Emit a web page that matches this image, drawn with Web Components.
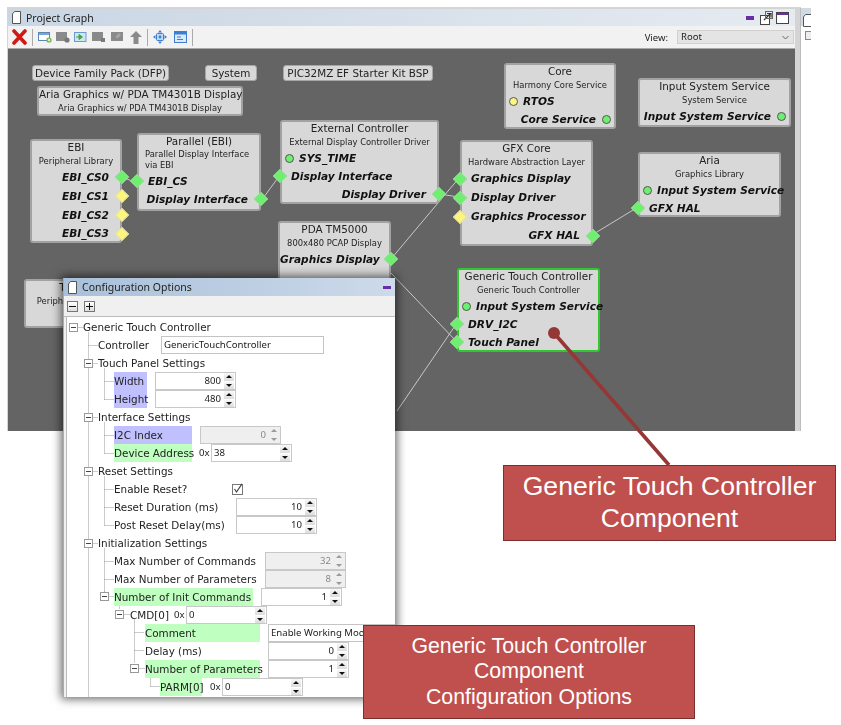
<!DOCTYPE html>
<html>
<head>
<meta charset="utf-8">
<title>Project Graph</title>
<style>
  html, body { margin: 0; padding: 0; background: #fff; }
  body { font-family: "DejaVu Sans", sans-serif; }
</style>
</head>
<body>
<app-stage>
  <project-window>
    <graph-pill style="left:24px;top:16px;width:137px">Device Family Pack (DFP)</graph-pill>
    <graph-pill style="left:197px;top:16px;width:52px">System</graph-pill>
    <graph-pill style="left:275px;top:16px;width:150px">PIC32MZ EF Starter Kit BSP</graph-pill>

    <graph-node name="Aria Graphics w/ PDA TM4301B Display" sub="Aria Graphics w/ PDA TM4301B Display" style="left:29px;top:37px;width:206px;height:30px"></graph-node>

    <graph-node name="Core" sub="Harmony Core Service" style="left:496px;top:14px;width:112px;height:66px">
      <graph-port shape="circle" color="yellow">RTOS</graph-port>
      <graph-port side="right" shape="circle" color="green">Core Service</graph-port>
    </graph-node>
    <graph-node name="Input System Service" sub="System Service" style="left:630px;top:29px;width:153px;height:49px">
      <graph-port side="right" shape="circle" color="green">Input System Service</graph-port>
    </graph-node>
    <graph-node name="External Controller" sub="External Display Controller Driver" style="left:272px;top:71px;width:159px;height:84px">
      <graph-port shape="circle" color="green">SYS_TIME</graph-port>
      <graph-port>Display Interface</graph-port>
      <graph-port side="right">Display Driver</graph-port>
    </graph-node>
    <graph-node name="EBI" sub="Peripheral Library" style="left:22px;top:90px;width:92px;height:104px;--port-h:18.8px">
      <graph-port side="right">EBI_CS0</graph-port>
      <graph-port side="right" color="yellow">EBI_CS1</graph-port>
      <graph-port side="right" color="yellow">EBI_CS2</graph-port>
      <graph-port side="right" color="yellow">EBI_CS3</graph-port>
    </graph-node>
    <graph-node name="Parallel (EBI)" style="left:129px;top:84px;width:124px;height:78px">
      <span slot="sub" class="left">Parallel Display Interface<br>via EBI</span>
      <graph-port>EBI_CS</graph-port>
      <graph-port side="right">Display Interface</graph-port>
    </graph-node>
    <graph-node name="GFX Core" sub="Hardware Abstraction Layer" style="left:452px;top:91px;width:133px;height:106px;--port-h:19px">
      <graph-port>Graphics Display</graph-port>
      <graph-port>Display Driver</graph-port>
      <graph-port color="yellow">Graphics Processor</graph-port>
      <graph-port side="right">GFX HAL</graph-port>
    </graph-node>
    <graph-node name="Aria" sub="Graphics Library" style="left:630px;top:103px;width:143px;height:65px">
      <graph-port shape="circle" color="green">Input System Service</graph-port>
      <graph-port>GFX HAL</graph-port>
    </graph-node>
    <graph-node name="PDA TM5000" sub="800x480 PCAP Display" style="left:270px;top:172px;width:113px;height:100px">
      <graph-port side="right">Graphics Display</graph-port>
    </graph-node>
    <graph-node name="Timer" sub="Peripheral Library" style="left:16px;top:230px;width:100px;height:49px"></graph-node>
    <graph-node selected name="Generic Touch Controller" sub="Generic Touch Controller" style="left:449px;top:219px;width:143px;height:84px">
      <graph-port shape="circle" color="green">Input System Service</graph-port>
      <graph-port>DRV_I2C</graph-port>
      <graph-port>Touch Panel</graph-port>
    </graph-node>
  </project-window>

  <side-window></side-window>

  <config-window>
    <cfg-row indent="16" label="Generic Touch Controller" lw="180"></cfg-row>
    <cfg-row indent="31" label="Controller" lw="59"><text-box style="width:163px">GenericTouchController</text-box></cfg-row>
    <cfg-row indent="31" label="Touch Panel Settings" lw="180"></cfg-row>
    <cfg-row indent="47" label="Width" lw="33" fill="blue" gap="8"><spin-box value="800"></spin-box></cfg-row>
    <cfg-row indent="47" label="Height" lw="33" fill="blue" gap="8"><spin-box value="480"></spin-box></cfg-row>
    <cfg-row indent="31" label="Interface Settings" lw="180"></cfg-row>
    <cfg-row indent="47" label="I2C Index" lw="78" fill="blue" gap="8"><spin-box value="0" disabled></spin-box></cfg-row>
    <cfg-row indent="47" label="Device Address" lw="78" fill="green" gap="7"><hex-prefix>0x</hex-prefix><spin-box value="38" left></spin-box></cfg-row>
    <cfg-row indent="31" label="Reset Settings" lw="180"></cfg-row>
    <cfg-row indent="47" label="Enable Reset?" lw="118" gap="0"><check-mark></check-mark></cfg-row>
    <cfg-row indent="47" label="Reset Duration (ms)" lw="118"><spin-box value="10"></spin-box></cfg-row>
    <cfg-row indent="47" label="Post Reset Delay(ms)" lw="118"><spin-box value="10"></spin-box></cfg-row>
    <cfg-row indent="31" label="Initialization Settings" lw="180"></cfg-row>
    <cfg-row indent="47" label="Max Number of Commands" lw="147"><spin-box value="32" disabled></spin-box></cfg-row>
    <cfg-row indent="47" label="Max Number of Parameters" lw="147"><spin-box value="8" disabled></spin-box></cfg-row>
    <cfg-row indent="47" label="Number of Init Commands" lw="139" fill="green" gap="8"><spin-box value="1"></spin-box></cfg-row>
    <cfg-row indent="63" label="CMD[0]" lw="41" gap="3"><hex-prefix>0x</hex-prefix><spin-box value="0" left></spin-box></cfg-row>
    <cfg-row indent="78" label="Comment" lw="115" fill="green" gap="8"><text-box style="width:140px">Enable Working Mode</text-box></cfg-row>
    <cfg-row indent="78" label="Delay (ms)" lw="115" gap="8"><spin-box value="0"></spin-box></cfg-row>
    <cfg-row indent="78" label="Number of Parameters" lw="115" fill="green" gap="8"><spin-box value="1"></spin-box></cfg-row>
    <cfg-row indent="93" label="PARM[0]" lw="42" fill="green" gap="8"><hex-prefix>0x</hex-prefix><spin-box value="0" left></spin-box></cfg-row>
  </config-window>

  <callout-box size="26.6" style="left:503px;top:465px;width:333px;height:76px">Generic Touch Controller<br>Component</callout-box>
  <callout-box size="21.3" style="left:363px;top:625px;width:332px;height:94px">Generic Touch Controller<br>Component<br>Configuration Options</callout-box>
  <leader-line></leader-line>
</app-stage>

<script>
  const GLYPH_FONT = '"DejaVu Sans", sans-serif'
  const UI_FONT = '"Noto Sans", "Liberation Sans", sans-serif'

  const docIcon = `<svg width="9" height="13" viewBox="0 0 9 13"><path d="M2.5.5h6v12h-8V3z" fill="#fff" stroke="#555"/></svg>`

  class AppStage extends HTMLElement {
    constructor() {
      super()
      this.attachShadow({ mode: 'open' }).innerHTML = `
        <style>
          :host { display: block; position: relative; width: 841px; height: 725px; overflow: hidden; background: #fff; }
          .soft { filter: blur(.3px); }
        </style>
        <slot></slot>`
    }
  }

  class ProjectWindow extends HTMLElement {
    constructor() {
      super()
      this.attachShadow({ mode: 'open' }).innerHTML = `
        <style>
          :host { display: flex; flex-direction: column; position: absolute; left: 7px; top: 7px; width: 794px; height: 424px;
            box-sizing: border-box; border: solid #d4d4d4; border-width: 2px 6px 0 1px; font-family: ${UI_FONT}; filter: blur(.25px); }
          .title { height: 17px; display: flex; align-items: center; gap: 5px; padding: 0 6px 0 4px; font-size: 10.5px; color: #222;
            background: linear-gradient(90deg, #c9d6e4, #e6ebf1); }
          .title span { flex: 1; }
          .ctl { display: flex; align-items: center; gap: 3px; }
          .bar { height: 23px; display: flex; align-items: center; padding-left: 4px; background: #f2f2f2; border-bottom: 1px solid #a8a8a8; box-sizing: border-box; }
          .bar svg { flex: none; display: block; }
          .sep { width: 1px; height: 17px; background: #aaa; margin: 0 5px 0 5px; }
          .view { margin-left: auto; display: flex; align-items: center; gap: 9px; font-size: 9.5px; color: #222; margin-right: 1px; }
          .select { width: 117px; height: 14px; background: #e4e4e4; border: 1px solid #d0d0d0; box-sizing: border-box; padding-left: 3px; line-height: 12px; position: relative; }
          .select svg { position: absolute; right: 4px; top: 4px; }
          .canvas { position: relative; flex: 1; background: #646464; overflow: hidden; }
          .wires { position: absolute; left: 0; top: 0; }
        </style>
        <div class="title">${docIcon}<span>Project Graph</span>
          <div class="ctl">
            <svg width="8" height="4" viewBox="0 0 8 4"><rect width="8" height="4" fill="#6a2ca8"/></svg>
            <svg width="14" height="14" viewBox="0 0 14 14" style="margin-left:2px"><rect x="1.5" y="4.5" width="9" height="9" fill="#fff" stroke="#444"/><path d="M5 9l6-6M8 2.5h4v4" fill="none" stroke="#333" stroke-width="1.2"/><rect x="6.5" y=".5" width="7" height="7" fill="none" stroke="#666"/></svg>
            <svg width="13" height="12" viewBox="0 0 13 12"><rect x=".5" y=".5" width="12" height="11" fill="#fff" stroke="#444"/><rect x="1" y="1" width="11" height="2" fill="#6a2ca8"/></svg>
          </div>
        </div>
        <div class="bar">
          <svg width="15" height="16" viewBox="0 0 15 16"><path d="M2 2l11 12M13 2L2 14" stroke="#d11a14" stroke-width="3.6" stroke-linecap="round"/></svg>
          <div class="sep"></div>
          <svg width="14" height="12" viewBox="0 0 14 12"><rect x=".5" y="1.5" width="11" height="8" fill="#fff" stroke="#5b87b8"/><rect x="1" y="2" width="10" height="2" fill="#7aa5d4"/><circle cx="11" cy="9" r="2.6" fill="#6db33f"/><path d="M9.6 9h2.8M11 7.6v2.8" stroke="#fff"/></svg>
          <svg style="margin-left:4px" width="14" height="12" viewBox="0 0 14 12"><rect y="1" width="11" height="9" fill="#8a8a8a"/><circle cx="11" cy="9" r="2.6" fill="#777"/></svg>
          <svg style="margin-left:4px" width="13" height="12" viewBox="0 0 13 12"><rect x=".5" y="1.5" width="11.5" height="9" fill="#cfe4f7" stroke="#6a9cc9"/><path d="M2 6h5M5 3.5L8.5 6 5 8.5z" fill="#3fa73f" stroke="#3fa73f"/></svg>
          <svg style="margin-left:5px" width="14" height="12" viewBox="0 0 14 12"><rect y="1" width="11" height="9" fill="#8a8a8a"/><rect x="9" y="7" width="4" height="4" fill="#7a7a7a"/></svg>
          <svg style="margin-left:5px" width="12" height="12" viewBox="0 0 12 12"><rect y="1" width="12" height="9" fill="#8a8a8a"/><path d="M8 2l2 2-3 3H5V5z" fill="#a5a5a5"/></svg>
          <svg style="margin-left:7px" width="12" height="13" viewBox="0 0 12 13"><path d="M6 0l6 6H8.5v7h-5V6H0z" fill="#8a8a8a"/></svg>
          <div class="sep"></div>
          <svg width="14" height="14" viewBox="0 0 14 14"><path d="M7 0l2 2.5H5zM7 14l2-2.5H5zM0 7l2.5-2v4zM14 7l-2.500-2v4z" fill="#3f7fd0"/><rect x="3.500" y="3.500" width="7" height="7" rx="1" fill="#bcd8f5" stroke="#3f7fd0"/><circle cx="7" cy="7" r="1.400" fill="#3f7fd0"/></svg>
          <svg style="margin-left:7px" width="13" height="12" viewBox="0 0 13 12"><rect x=".5" y=".5" width="12" height="11" fill="#d9ebfb" stroke="#3f7fd0"/><rect x="1" y="1" width="11" height="2.500" fill="#3f7fd0"/><path d="M3 6h4M3 8.500h6" stroke="#3f7fd0"/></svg>
          <div class="sep"></div>
          <div class="view">View:
            <div class="select">Root<svg width="7" height="5" viewBox="0 0 7 5"><path d="M.5 1l3 3 3-3" fill="none" stroke="#666"/></svg></div>
          </div>
        </div>
        <div class="canvas">
          <svg class="wires" width="790" height="382" stroke="#c8c8c8" stroke-width="1" fill="none">
            <path d="M114 128L129 134M253 152L272 126M431 145L451 148M383 210L451 129M584 186L630 158M381 222L449 293M389 362L449 274"/>
          </svg>
          <slot></slot>
        </div>`
    }
  }

  class SideWindow extends HTMLElement {
    constructor() {
      super()
      this.attachShadow({ mode: 'open' }).innerHTML = `
        <style>
          :host { display: block; position: absolute; left: 800px; top: 8px; width: 11px; height: 423px; box-sizing: border-box; border-left: 1px solid #bdbdbd; overflow: hidden; background: #fff; }
          .title { height: 18px; background: #cfdae6; border-top: 1px solid #d8d8d8; box-sizing: border-box; padding: 3px 0 0 2px; }
          .box { margin: 5px 0 0 4px; width: 9px; height: 9px; box-sizing: border-box; border: 1px solid #888; background: #eee; }
        </style>
        <div class="title">${docIcon}</div>
        <div class="box"></div>`
    }
  }

  class GraphPill extends HTMLElement {
    constructor() {
      super()
      this.attachShadow({ mode: 'open' }).innerHTML = `
        <style>
          :host { display: block; position: absolute; height: 16px; box-sizing: border-box; background: #d8d8d8; border: 1px solid #a6a6a6; border-radius: 3px;
            font: 10.4px/14px ${GLYPH_FONT}; color: #222; text-align: center; white-space: nowrap; }
        </style>
        <slot></slot>`
    }
  }

  class GraphNode extends HTMLElement {
    constructor() {
      super()
      this.attachShadow({ mode: 'open' })
    }
    connectedCallback() {
      const selected = this.hasAttribute('selected')
      this.shadowRoot.innerHTML = `
        <style>
          :host { display: block; position: absolute; box-sizing: border-box; background: #d8d8d8; border-radius: 3px;
            border: 2px solid ${selected ? '#2fc92f' : '#a2a2a2'}; color: #222; --port-h: 18px; }
          .name { font: 10.4px/13px ${GLYPH_FONT}; text-align: center; white-space: nowrap; }
          .sub { font: 8.4px/15px ${GLYPH_FONT}; text-align: center; white-space: nowrap; margin-bottom: -1px; }
          ::slotted([slot=sub]) { display: block; text-align: left; padding: 1px 0 1px 6px; line-height: 11px; margin-bottom: 1px; }
        </style>
        <div class="name"></div>
        <div class="sub"><slot name="sub"></slot></div>
        <slot></slot>`
      this.shadowRoot.querySelector('.name').textContent = this.getAttribute('name')
      const sub = this.getAttribute('sub')
      if (sub) this.shadowRoot.querySelector('.sub').append(sub)
    }
  }

  class GraphPort extends HTMLElement {
    constructor() {
      super()
      this.attachShadow({ mode: 'open' })
    }
    connectedCallback() {
      const right = this.getAttribute('side') === 'right'
      const circle = this.getAttribute('shape') === 'circle'
      const yellow = this.getAttribute('color') === 'yellow'
      const fill = yellow ? '#fdf57d' : '#6fef6f'
      const inset = circle ? (right ? 18 : 17) : (right ? 11 : 9)
      const mark = circle
        ? `width:7px;height:7px;border-radius:50%;border:1px solid #555;background:${fill};${right ? 'right:3px' : 'left:3px'};top:calc(50% - 4.5px)`
        : `width:8px;height:8px;transform:rotate(45deg);background:${fill};border:1px solid ${yellow ? '#e5e0a0' : '#8fe08f'};${right ? 'right:-7px' : 'left:-7px'};top:calc(50% - 5px)`
      this.shadowRoot.innerHTML = `
        <style>
          :host { display: block; position: relative; height: var(--port-h, 18px); font: italic bold 10.6px/18px ${GLYPH_FONT}; color: #111;
            white-space: nowrap; text-align: ${right ? 'right' : 'left'}; padding-${right ? 'right' : 'left'}: ${inset}px; }
          i { position: absolute; ${mark}; }
        </style>
        <i></i><slot></slot>`
    }
  }

  class ConfigWindow extends HTMLElement {
    constructor() {
      super()
      this.attachShadow({ mode: 'open' }).innerHTML = `
        <style>
          :host { display: flex; flex-direction: column; position: absolute; left: 63px; top: 278px; width: 332px; height: 419px; background: #f0f0f0;
            box-sizing: border-box; border-left: 1px solid #aaa; box-shadow: 0 0 9px 2px rgba(0,0,0,.6); filter: blur(.25px); font-family: ${UI_FONT}; }
          .title { height: 18px; flex: none; display: flex; align-items: center; gap: 5px; padding: 0 4px 0 4px; background: linear-gradient(90deg, #a9c0da, #cddaea); font-size: 10.5px; color: #222; }
          .title span { flex: 1; }
          .title i { width: 8px; height: 3px; background: #6a2ca8; }
          .tools { height: 21px; flex: none; display: flex; align-items: center; gap: 6px; padding-left: 3px; box-sizing: border-box; border-bottom: 1px solid #bbb; }
          .tools b { width: 9px; height: 9px; border: 1px solid #777; background: linear-gradient(#fff, #ddd); position: relative; }
          .tools b::before { content: ""; position: absolute; left: 1px; right: 1px; top: 4px; height: 1px; background: #111; }
          .tools b.plus::after { content: ""; position: absolute; top: 1px; bottom: 1px; left: 4px; width: 1px; background: #111; }
          .tree { position: relative; flex: 1; background: #fff; margin-left: 2px; border-left: 1px solid #bbb; padding-top: 1px; overflow: hidden; }
          .guides { position: absolute; left: 0; top: 0; }
          .boxes b { position: absolute; width: 7px; height: 7px; border: 1px solid #999; background: #fff; }
          .boxes b::before { content: ""; position: absolute; left: 1px; right: 1px; top: 3px; height: 1px; background: #444; }
          .rows { position: relative; }
        </style>
        <div class="title">${docIcon}<span>Configuration Options</span><i></i></div>
        <div class="tools"><b></b><b class="plus"></b></div>
        <div class="tree">
          <svg class="guides" width="330" height="390" fill="none" stroke="#999" stroke-dasharray="1 1"></svg>
          <div class="boxes"></div>
          <div class="rows"><slot></slot></div>
        </div>`
      // tree guide lines in page coordinates, converted to the tree's origin
      const ox = 66, oy = 317
      const segs = [[72,327,81,327],[87,332,87,697],[87,345,96,345],[103,368,103,399],[103,381,112,381],[103,399,112,399],
        [103,422,103,453],[103,435,112,435],[103,453,112,453],[103,476,103,525],[103,489,112,489],[103,507,112,507],[103,525,112,525],
        [103,548,103,591],[103,561,112,561],[103,579,112,579],[87,363,96,363],[87,417,96,417],[87,471,96,471],[87,543,96,543],[107,596,112,596],
        [103,591,103,596],[118,601,118,609],[123,614,128,614],[133,619,133,663],[133,632,143,632],[133,650,143,650],[138,668,143,668],[149,673,149,686],[149,686,158,686]]
      this.shadowRoot.querySelector('.guides').innerHTML =
        segs.map(s => `<path d="M${s[0]-ox+.5} ${s[1]-oy+.5}L${s[2]-ox+.5} ${s[3]-oy+.5}"/>`).join('')
      const boxes = [[72,327],[87,363],[87,417],[87,471],[87,543],[103,596],[118,614],[133,668]]
      this.shadowRoot.querySelector('.boxes').innerHTML =
        boxes.map(b => `<b style="left:${b[0]-ox-4}px;top:${b[1]-oy-4}px"></b>`).join('')
    }
  }

  class CfgRow extends HTMLElement {
    constructor() {
      super()
      this.attachShadow({ mode: 'open' })
    }
    connectedCallback() {
      const fills = { blue: '#c0c0ff', green: '#bfffbf' }
      const fill = fills[this.getAttribute('fill')] || 'transparent'
      const gap = this.getAttribute('gap') || '4'
      this.shadowRoot.innerHTML = `
        <style>
          :host { display: flex; align-items: center; height: 18px; white-space: nowrap; font: 10.4px/18px ${GLYPH_FONT}; color: #222;
            padding-left: ${this.getAttribute('indent')}px; }
          .label { flex: none; height: 18px; background: ${fill}; width: ${this.getAttribute('lw')}px; margin-right: ${gap}px; }
          .value { display: flex; align-items: center; flex: none; }
        </style>
        <div class="label"></div>
        <div class="value"><slot></slot></div>`
      this.shadowRoot.querySelector('.label').textContent = this.getAttribute('label')
    }
  }

  class TextBox extends HTMLElement {
    constructor() {
      super()
      this.attachShadow({ mode: 'open' }).innerHTML = `
        <style>
          :host { display: block; height: 18px; box-sizing: border-box; border: 1px solid #c4c4c4; background: #fff; padding-left: 2px;
            font: 9.6px/16px ${UI_FONT}; color: #222; overflow: hidden; }
        </style>
        <slot></slot>`
    }
  }

  class SpinBox extends HTMLElement {
    constructor() {
      super()
      this.attachShadow({ mode: 'open' })
    }
    connectedCallback() {
      const off = this.hasAttribute('disabled')
      const left = this.hasAttribute('left')
      const tone = off ? '#9a9a9a' : '#111'
      this.shadowRoot.innerHTML = `
        <style>
          :host { display: flex; width: 81px; height: 18px; box-sizing: border-box; border: 1px solid #c8c8c8; background: ${off ? '#efefef' : '#fff'};
            font: 9.6px/16px ${UI_FONT}; color: ${off ? '#8a8a8a' : '#222'}; }
          .val { flex: 1; text-align: ${left ? 'left' : 'right'}; padding: 0 2px; }
          .btns { width: 12px; flex: none; display: flex; flex-direction: column; gap: 1px; padding: 0 1px; box-sizing: border-box; }
          .btns b { flex: 1; background: ${off ? '#efefef' : 'linear-gradient(#f8f8f8,#dcdcdc)'}; display: flex; align-items: center; justify-content: center; }
          .up::before { content: ""; border: 3px solid transparent; border-top: 0; border-bottom: 3px solid ${tone}; }
          .dn::before { content: ""; border: 3px solid transparent; border-bottom: 0; border-top: 3px solid ${tone}; }
        </style>
        <div class="val"></div>
        <div class="btns"><b class="up"></b><b class="dn"></b></div>`
      this.shadowRoot.querySelector('.val').textContent = this.getAttribute('value')
    }
  }

  class HexPrefix extends HTMLElement {
    constructor() {
      super()
      this.attachShadow({ mode: 'open' }).innerHTML = `
        <style>:host { display: block; width: 12px; font: 9.6px/18px ${UI_FONT}; color: #222; }</style>
        <slot></slot>`
    }
  }

  class CheckMark extends HTMLElement {
    constructor() {
      super()
      this.attachShadow({ mode: 'open' }).innerHTML = `
        <style>:host { display: block; width: 11px; height: 12px; margin-left: 0; }</style>
        <svg width="11" height="12" viewBox="0 0 11 12" style="display:block"><rect x=".5" y="1.5" width="10" height="10" fill="#fff" stroke="#777"/><path d="M2.500 6l2 3L10 .800" fill="none" stroke="#444" stroke-width="1.200"/></svg>`
    }
  }

  class CalloutBox extends HTMLElement {
    constructor() {
      super()
      this.attachShadow({ mode: 'open' })
    }
    connectedCallback() {
      this.shadowRoot.innerHTML = `
        <style>
          :host { display: flex; align-items: center; justify-content: center; position: absolute; box-sizing: border-box; text-align: center;
            background: #c0504d; border: 1px solid #7a2f2d; color: #fff; font: ${this.getAttribute('size')}px/1.2 "Liberation Sans", sans-serif; }
        </style>
        <div><slot></slot></div>`
    }
  }

  class LeaderLine extends HTMLElement {
    constructor() {
      super()
      this.attachShadow({ mode: 'open' }).innerHTML = `
        <style>:host { display: block; position: absolute; left: 0; top: 0; width: 841px; height: 725px; pointer-events: none; }</style>
        <svg width="841" height="725" style="display:block"><path d="M554 333L669 465" stroke="#953735" stroke-width="3.600"/><circle cx="554" cy="333" r="6" fill="#953735"/></svg>`
    }
  }

  customElements.define('app-stage', AppStage)
  customElements.define('project-window', ProjectWindow)
  customElements.define('side-window', SideWindow)
  customElements.define('graph-pill', GraphPill)
  customElements.define('graph-node', GraphNode)
  customElements.define('graph-port', GraphPort)
  customElements.define('config-window', ConfigWindow)
  customElements.define('cfg-row', CfgRow)
  customElements.define('text-box', TextBox)
  customElements.define('spin-box', SpinBox)
  customElements.define('hex-prefix', HexPrefix)
  customElements.define('check-mark', CheckMark)
  customElements.define('callout-box', CalloutBox)
  customElements.define('leader-line', LeaderLine)
</script>
</body>
</html>
